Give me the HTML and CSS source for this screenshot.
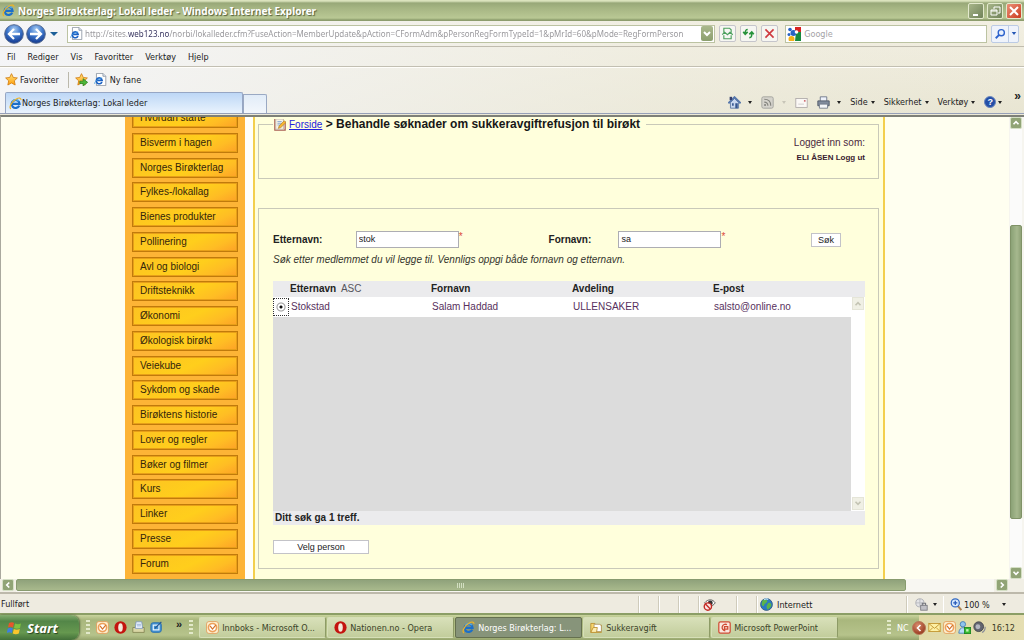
FILE: index.html
```html
<!DOCTYPE html>
<html lang="no">
<head>
<meta charset="utf-8">
<title>Norges Birøkterlag: Lokal leder</title>
<link rel="stylesheet" href="styles.css">
</head>
<body>
<svg class="defs" aria-hidden="true">
  <defs>
    <radialGradient id="blueBall" cx=".5" cy=".25" r=".8"><stop offset="0" stop-color="#a9cdf2"/><stop offset=".45" stop-color="#3f78cc"/><stop offset="1" stop-color="#0c2f86"/></radialGradient>
    <radialGradient id="redBall" cx=".4" cy=".3" r=".8"><stop offset="0" stop-color="#d98a6c"/><stop offset="1" stop-color="#8e2f14"/></radialGradient>
    <linearGradient id="starFill" x2="0" y2="1"><stop offset="0" stop-color="#ffe680"/><stop offset="1" stop-color="#ff9d0a"/></linearGradient>
  </defs>
  <symbol id="ie" viewBox="0 0 16 16">
    <path d="M12.6 10.6A4.9 4.9 0 1 1 13 8.4H4.2" fill="none" stroke="#1c6fc9" stroke-width="2.7"/>
    <path d="M12 5.2A4.9 4.9 0 0 0 4 5.5" fill="none" stroke="#58b1ee" stroke-width="1.5"/>
    <path d="M2.4 14.6C-.8 12.6 4 5 9 2.4c3-1.700 6-1.700 5.600 1.200" fill="none" stroke="#f0b323" stroke-width="1.500"/>
  </symbol>
  <symbol id="iepage" viewBox="0 0 16 16">
    <path d="M3 .5h8l3.500 3.500v11.500H3z" fill="#fff" stroke="#87919e"/><path d="M11 .5V4h3.500" fill="#dfe7f2" stroke="#87919e"/>
    <path d="M9.800 11A3.600 3.600 0 1 1 10 9H4" fill="none" stroke="#1c62c4" stroke-width="2"/>
    <path d="M1 13.500c-1-2 3-6.500 9-7.500" fill="none" stroke="#3d9ae0" stroke-width="1"/>
  </symbol>
  <symbol id="star" viewBox="0 0 16 16"><path d="M8 .8l2.200 4.700 5 .6-3.700 3.500 1 5.200L8 12.300l-4.500 2.500 1-5.200L.8 6.100l5-.6z" fill="url(#starFill)" stroke="#d27a0c"/></symbol>
  <symbol id="outlook" viewBox="0 0 16 16"><rect x=".7" y=".7" width="14.600" height="14.600" rx="3" fill="#fdf1d0" stroke="#e29a56"/><circle cx="8" cy="8" r="5" fill="#fff" stroke="#eda05a" stroke-width="2"/><path d="M5 6l3 4 4-5" fill="none" stroke="#d5742a" stroke-width="1.500"/></symbol>
  <symbol id="opera" viewBox="0 0 16 16"><ellipse cx="8" cy="8" rx="7.500" ry="7.700" fill="#c4140f"/><ellipse cx="8" cy="8" rx="2.800" ry="5.200" fill="#f4e9dc"/></symbol>
</svg>

<header class="titlebar">
  <svg class="ico"><use href="#ie"/></svg>
  <h1 class="title">Norges Birøkterlag: Lokal leder - Windows Internet Explorer</h1>
  <div class="winbtns">
    <button class="win" aria-label="Minimer"><svg viewBox="0 0 14 14"><path d="M4 11h5" stroke="#fff" stroke-width="2"/></svg></button>
    <button class="win" aria-label="Gjenopprett"><svg viewBox="0 0 14 14"><path d="M6 5V3h6v6h-2M3 6h6v5H3zM3 7h6" fill="none" stroke="#fff"/></svg></button>
    <button class="win close" aria-label="Lukk"><svg viewBox="0 0 14 14"><path d="M3 3l8 8M11 3l-8 8" stroke="#fff" stroke-width="2"/></svg></button>
  </div>
</header>

<div class="chrome">
  <div class="addressbar">
    <button class="nav" aria-label="Tilbake"><svg viewBox="0 0 20 20"><circle cx="10" cy="10" r="9.300" fill="url(#blueBall)" stroke="#52688f"/><path d="M16 10H5.500M10 5l-5 5 5 5" fill="none" stroke="#fff" stroke-width="2.300"/></svg></button>
    <button class="nav" aria-label="Frem"><svg viewBox="0 0 20 20"><circle cx="10" cy="10" r="9.300" fill="url(#blueBall)" stroke="#52688f"/><path d="M4 10h10.500M10 5l5 5-5 5" fill="none" stroke="#fff" stroke-width="2.300"/></svg></button>
    <button class="recent" aria-label="Nylige sider"><svg viewBox="0 0 8 6"><path d="M0 1h8L4 5z" fill="#1c5f98"/></svg></button>
    <div class="box url">
      <svg class="ico"><use href="#iepage"/></svg>
      <input class="urlinput" aria-label="Adresse" value="http://sites.web123.no/norbi/lokalleder.cfm?FuseAction=MemberUpdate&amp;pAction=CFormAdm&amp;pPersonRegFormTypeId=1&amp;pMrId=60&amp;pMode=RegFormPerson">
      <button class="drop" aria-label="Vis adresser"><svg viewBox="0 0 12 14"><path d="M3 5l3 3 3-3" fill="none" stroke="#fff" stroke-width="2"/></svg></button>
    </div>
    <button class="tool" aria-label="Kompatibilitet"><svg viewBox="0 0 16 16"><path d="M3.500 7V1.500h7l2 2V7M3.500 10v4.500h9V10M1.500 9.500l3-3 3.500 3 3-3 3.500 3" fill="none" stroke="#4ba05c" stroke-width="1.400"/></svg></button>
    <button class="tool" aria-label="Oppdater"><svg viewBox="0 0 16 16"><path d="M7 3c-3 0-3 2-3 5M1.500 6L4 9l3-3M9 13c3 0 3-2 3-5M9 9l3-3 2.500 3" fill="none" stroke="#27933c" stroke-width="2"/></svg></button>
    <button class="tool" aria-label="Stopp"><svg viewBox="0 0 16 16"><path d="M3 3l10 10M13 3L3 13" stroke="#cf3a40" stroke-width="2"/></svg></button>
    <div class="box search">
      <svg class="google" viewBox="0 0 14 14"><rect width="14" height="14" fill="#fff"/><path d="M8 0h6v6H8z" fill="#d8231f"/><path d="M9 5h5v9H8z" fill="#178a3e"/><circle cx="3" cy="2.500" r="1.800" fill="#2863c4"/><circle cx="6.500" cy="6" r="3" fill="#2863c4"/><circle cx="2" cy="7.500" r="1.500" fill="#2863c4"/><circle cx="4.500" cy="12" r="3" fill="#f5b21a"/><circle cx="9.500" cy="5" r="1.800" fill="#fff"/></svg>
      <input class="searchinput" aria-label="Søk på nettet" placeholder="Google">
    </div>
    <div class="searchgroup">
      <button class="searchbtn" aria-label="Søk"><svg viewBox="0 0 14 14"><circle cx="8.500" cy="5.500" r="3.600" fill="#e9f1fd" stroke="#2c62cd" stroke-width="1.600"/><path d="M6 8l-4 4" stroke="#2c62cd" stroke-width="2.200"/></svg></button>
      <button class="searchmore" aria-label="Søkevalg"><svg viewBox="0 0 8 6"><path d="M1 1h6L4 5z" fill="#2457b5"/></svg></button>
    </div>
  </div>
  <nav class="menubar"><button>Fil</button><button>Rediger</button><button>Vis</button><button>Favoritter</button><button>Verktøy</button><button>Hjelp</button></nav>
  <div class="favbar">
    <button class="fav"><svg class="ico"><use href="#star"/></svg>Favoritter</button>
    <span class="divider"></span>
    <button class="fav" aria-label="Legg til i favoritter"><svg class="ico" viewBox="0 0 16 16"><use href="#star"/><path d="M6 10h4V7l5.500 4.500L10 16v-3H6z" fill="#4cb83c" stroke="#2b8423"/></svg></button>
    <button class="fav"><svg class="ico"><use href="#iepage"/></svg>Ny fane</button>
  </div>
  <div class="tabrow">
    <button class="tab"><svg class="ico"><use href="#ie"/></svg>Norges Birøkterlag: Lokal leder</button>
    <button class="newtab" aria-label="Ny fane"></button>
    <div class="commands">
      <button class="cmd home" aria-label="Startside"><svg class="ico" viewBox="0 0 16 16"><path d="M3 8v7h10V8L8 3z" fill="#c9d8ef" stroke="#56739f"/><path d="M.5 9L8 1.500 15.500 9" fill="none" stroke="#5778ac" stroke-width="2.400"/><path d="M2 1h3v4H2z" fill="#35406f"/><path d="M9 9h3v6H9zM5 9h2v3H5z" fill="#35568f"/></svg><i></i></button>
      <button class="cmd rss" aria-label="Feeder"><svg class="ico" viewBox="0 0 16 16"><rect x="1" y="1" width="14" height="14" rx="2" fill="#d5d3cc" stroke="#9c9c98"/><path d="M4 4c5 0 8 3 8 8M4 7.500c3 0 4.500 2 4.500 4.500" fill="none" stroke="#85857f" stroke-width="1.400"/><circle cx="5" cy="11" r="1.300" fill="#85857f"/></svg><i class="faint"></i></button>
      <button class="cmd mail" aria-label="Les e-post"><svg class="ico" viewBox="0 0 16 16"><rect x="1" y="3" width="14" height="11" fill="#fbf8f5" stroke="#aaa5a5"/><rect x="11" y="5" width="2" height="2" fill="#cf6b70"/><path d="M4 10h7" stroke="#c9c5c5"/></svg></button>
      <button class="cmd print" aria-label="Skriv ut"><svg class="ico" viewBox="0 0 16 16"><path d="M4 6V1h8v5" fill="#eef2fb" stroke="#60697e"/><path d="M1 6h14v6H1z" fill="#818c9d" stroke="#465060"/><path d="M3 10h10v5H3z" fill="#f4f6f9" stroke="#6a7484"/></svg><i></i></button>
      <button class="cmd">Side<i></i></button>
      <button class="cmd">Sikkerhet<i></i></button>
      <button class="cmd">Verktøy<i></i></button>
      <button class="cmd help" aria-label="Hjelp"><span class="q">?</span><i></i></button>
    </div>
    <button class="more" aria-label="Flere kommandoer">»</button>
  </div>
</div>

<div class="viewport">
  <div class="page">
    <div class="site">
      <nav class="side">
        <a href="#">Hvordan starte</a><a href="#">Bisverm i hagen</a><a href="#">Norges Birøkterlag</a><a href="#">Fylkes-/lokallag</a><a href="#">Bienes produkter</a><a href="#">Pollinering</a><a href="#">Avl og biologi</a><a href="#">Driftsteknikk</a><a href="#">Økonomi</a><a href="#">Økologisk birøkt</a><a href="#">Veiekube</a><a href="#">Sykdom og skade</a><a href="#">Birøktens historie</a><a href="#">Lover og regler</a><a href="#">Bøker og filmer</a><a href="#">Kurs</a><a href="#">Linker</a><a href="#">Presse</a><a href="#">Forum</a>
      </nav>
      <main class="main">
        <fieldset class="panel intro">
          <legend><svg class="note" viewBox="0 0 14 14"><path d="M1 0v13h12V3" fill="#fff" stroke="#a95f50" stroke-width="1.500"/><path d="M2 0h9v12H2z" fill="#f8f4e8" stroke="#c2b2a0"/><path d="M4 3h5M4 5h5M4 7h3" stroke="#7da0cc"/><path d="M5 11l1-3 6-6 2 2-6 6z" fill="#f6b532" stroke="#a8782c" stroke-width=".7"/></svg><a href="#">Forside</a> &gt; Behandle søknader om sukkeravgiftrefusjon til birøkt</legend>
          <p class="logged">Logget inn som:</p>
          <p class="user">ELI ÅSEN <a href="#">Logg ut</a></p>
        </fieldset>
        <fieldset class="panel form">
          <div class="fields">
            <label for="last">Etternavn:</label>
            <span class="field"><input id="last" value="stok"><em>*</em></span>
            <label for="first">Fornavn:</label>
            <span class="field"><input id="first" value="sa"><em>*</em></span>
            <button class="btn sok">Søk</button>
          </div>
          <p class="hint">Søk etter medlemmet du vil legge til. Vennligs oppgi både fornavn og etternavn.</p>
          <table class="hits">
            <colgroup><col class="cpick"><col class="cdata"><col class="cdata"><col class="cdata"><col><col class="cscroll"></colgroup>
            <thead><tr><th></th><th>Etternavn <span>ASC</span></th><th>Fornavn</th><th>Avdeling</th><th>E-post</th><th></th></tr></thead>
            <tbody>
              <tr class="hit"><td class="pick"><input type="radio" name="person" aria-label="Stokstad" checked></td><td>Stokstad</td><td>Salam Haddad</td><td>ULLENSAKER</td><td>salsto@online.no</td><td class="track"><button aria-label="Rull opp"><svg viewBox="0 0 12 12"><path d="M3 7.500l3-3 3 3" fill="none" stroke="#c4c4b4" stroke-width="2"/></svg></button></td></tr>
              <tr class="rest"><td colspan="5"></td><td class="track bottom"><button aria-label="Rull ned"><svg viewBox="0 0 12 12"><path d="M3 4.500l3 3 3-3" fill="none" stroke="#c4c4b4" stroke-width="2"/></svg></button></td></tr>
            </tbody>
            <tfoot><tr><td colspan="6">Ditt søk ga 1 treff.</td></tr></tfoot>
          </table>
          <button class="btn velg">Velg person</button>
        </fieldset>
      </main>
    </div>
  </div>
  <div class="vscroll">
    <button class="sb" aria-label="Opp"><svg viewBox="0 0 12 12"><path d="M3 7.500l3-3 3 3" fill="none" stroke="#fff" stroke-width="2"/></svg></button>
    <div class="vtrack"><div class="vthumb"></div></div>
    <button class="sb" aria-label="Ned"><svg viewBox="0 0 12 12"><path d="M3 4.500l3 3 3-3" fill="none" stroke="#fff" stroke-width="2"/></svg></button>
  </div>
</div>
<div class="hscroll">
  <button class="sb" aria-label="Venstre"><svg viewBox="0 0 12 12"><path d="M7.500 3l-3 3 3 3" fill="none" stroke="#fff" stroke-width="2"/></svg></button>
  <div class="htrack"><div class="hthumb"><span class="grip"></span></div></div>
  <button class="sb" aria-label="Høyre"><svg viewBox="0 0 12 12"><path d="M4.500 3l3 3-3 3" fill="none" stroke="#fff" stroke-width="2"/></svg></button>
</div>

<footer class="status">
  <span class="msg">Fullført</span>
  <span class="cell"></span><span class="cell"></span><span class="cell"></span>
  <span class="cell"><svg class="ico" viewBox="0 0 16 16"><path d="M2 6c4-5 10-5 13 0-3 5-9 5-13 0z" fill="#fff" stroke="#444"/><circle cx="9" cy="6" r="3" fill="#333"/><circle cx="6" cy="10.500" r="4.500" fill="#fbe4e2" stroke="#c32a24" stroke-width="1.700"/><path d="M3 7.500l6 6" stroke="#c32a24" stroke-width="1.700"/></svg></span>
  <span class="cell"></span>
  <span class="cell zone"><svg class="ico" viewBox="0 0 16 16"><circle cx="8" cy="8" r="7.300" fill="#2b79c4" stroke="#31577c"/><path d="M3 3c3-2 6-1 6 1S5 7 5 9 3 10 2 8zM10 6c3-1 4 1 4 3s-3 4-4 5-2-3-2-4z" fill="#5cb44a"/><path d="M5 2c2-1 4-1 5 0" stroke="#bfe4fa" fill="none" stroke-width="1.500"/></svg>Internett</span>
  <button class="cell lock" aria-label="Beskyttet modus"><svg class="ico" viewBox="0 0 16 16"><circle cx="6" cy="6" r="5" fill="#e3e3e6" stroke="#a4a6ac"/><path d="M1 6h9M6 1v9" stroke="#b4b6bc"/><rect x="7" y="9" width="8" height="6" fill="#c0c0c6" stroke="#76777e"/><path d="M9 9V6.500h4V9" fill="none" stroke="#76777e" stroke-width="1.400"/></svg><i></i></button>
  <button class="cell zoom"><svg class="ico" viewBox="0 0 16 16"><path d="M9 9l5 6" stroke="#b08450" stroke-width="2.500"/><circle cx="6.500" cy="6" r="5" fill="#d7e9fc" stroke="#3469c2" stroke-width="1.500"/><path d="M4 6h5M6.500 3.500v5" stroke="#2557b8" stroke-width="1.500"/></svg>100 %<i></i></button>
</footer>

<footer class="taskbar">
  <button class="start"><svg viewBox="0 0 16 16"><path d="M2 3c2-1 4-1 5 0L6 7.500c-2-1-3-1-5 0z" fill="#e8552c"/><path d="M8 3.400c2 1 4 1 6 0L13 8c-2 1-4 1-6 0z" fill="#7fc23f"/><path d="M.8 8.500c2-1 4-1 5 0l-1 4.500c-2-1-3-1-5 0z" fill="#3e7fe0"/><path d="M6.800 9c2 1 4 1 6 0l-1 4.500c-2 1-4 1-6 0z" fill="#f9c62c"/></svg>Start</button>
  <span class="handle"></span>
  <div class="quick">
    <button aria-label="Outlook"><svg class="ico"><use href="#outlook"/></svg></button>
    <button aria-label="Opera"><svg class="ico"><use href="#opera"/></svg></button>
    <button aria-label="Skriver"><svg class="ico" viewBox="0 0 16 16"><path d="M1 8h14v6H1z" fill="#d9d6a5" stroke="#80814f"/><path d="M5 1h7l1 8H4z" fill="#f2f7ff" stroke="#7694bb"/><path d="M6 4h5M6 6h5" stroke="#80a3cf"/></svg></button>
    <button aria-label="Skrivebord"><svg class="ico" viewBox="0 0 16 16"><rect x="1" y="2" width="13" height="12" rx="3" fill="#3f8fd0" stroke="#2a6cac"/><path d="M4 5h7v6H4z" fill="none" stroke="#e9f4fd" stroke-width="1.500"/><path d="M6 9l8-8" stroke="#255691" stroke-width="1.500"/></svg></button>
  </div>
  <button class="more2" aria-label="Flere">»</button>
  <span class="handle"></span>
  <div class="tasks">
    <button class="task"><svg class="ico"><use href="#outlook"/></svg><span>Innboks - Microsoft O...</span></button>
    <button class="task"><svg class="ico"><use href="#opera"/></svg><span>Nationen.no - Opera</span></button>
    <button class="task active"><svg class="ico"><use href="#ie"/></svg><span>Norges Birøkterlag: L...</span></button>
    <button class="task"><svg class="ico" viewBox="0 0 16 16"><path d="M1 3h5l1 2h7v9H1z" fill="#f9d66c" stroke="#b88a27"/><path d="M5 4h7l2 2v7H5z" fill="#fff" stroke="#a9935f"/><path d="M1 14l3-6h5l-1 6z" fill="#fdecae" stroke="#b88a27"/></svg><span>Sukkeravgift</span></button>
    <button class="task"><svg class="ico" viewBox="0 0 16 16"><rect x="1" y="1" width="14" height="14" rx="2" fill="#fbe7df" stroke="#cf4a33" stroke-width="1.500"/><path d="M11 4.500A4 4 0 1 0 9 12M8 12V7h4v3H8" fill="none" stroke="#cf4a33" stroke-width="1.600"/></svg><span>Microsoft PowerPoint</span></button>
  </div>
  <span class="handle"></span>
  <span class="lang">NC</span>
  <div class="tray">
    <button class="chev" aria-label="Vis skjulte ikoner"><svg viewBox="0 0 14 14"><circle cx="7" cy="7" r="6.500" fill="url(#redBall)" stroke="#b77a5b"/><path d="M8.500 4l-3 3 3 3" fill="none" stroke="#fff" stroke-width="1.600"/></svg></button>
    <svg class="ico" viewBox="0 0 16 16"><rect x="1" y="3" width="14" height="10" fill="#fdf0a4" stroke="#bd8d25"/><path d="M1 3l7 6 7-6M1 13l5-5M15 13l-5-5" fill="none" stroke="#bd8d25"/></svg>
    <svg class="ico"><use href="#outlook"/></svg>
    <svg class="ico" viewBox="0 0 16 16"><circle cx="6" cy="4" r="3.300" fill="#8fc4ec" stroke="#3b78b4"/><path d="M1 15c0-9 10-9 10 0z" fill="#b8dcf5" stroke="#3b78b4"/><rect x="8" y="8" width="7.500" height="7.500" fill="#35ba31" stroke="#16831b"/><rect x="10" y="10" width="3" height="3" fill="#c9f3b7"/></svg>
    <svg class="ico" viewBox="0 0 16 16"><circle cx="7" cy="7" r="6" fill="#62656f" stroke="#3d4049"/><circle cx="6" cy="7" r="3" fill="#b3b6c0"/><path d="M11 14c3-1 4-4 4-7" fill="none" stroke="#8a8d97" stroke-width="1.500"/></svg>
    <time class="clock">16:12</time>
  </div>
</footer>
</body>
</html>
```
FILE: styles.css
```css
* { box-sizing: border-box; }
html, body { height: 100%; margin: 0; }
body {
  display: flex;
  flex-direction: column;
  overflow: hidden;
  background: #ece9d8;
  color: #222;
  font: 9px/12px "DejaVu Sans Condensed", "Noto Sans", sans-serif;
}
button, input { font: inherit; color: inherit; margin: 0; padding: 0; }
button { background: none; border: 0; display: inline-flex; align-items: center; white-space: nowrap; }
p { margin: 0; }
svg { display: block; flex: none; }
.defs { position: absolute; width: 0; height: 0; }
.ico { width: 13px; height: 13px; flex: none; }
i { border: 3px solid transparent; border-width: 3px 2px 0; border-top-color: #222; width: 0; height: 0; margin-left: 3px; }
i.faint { border-top-color: #c8c5b8; }

/* Title bar */
.titlebar {
  display: flex;
  align-items: center;
  gap: 3px;
  flex: none;
  height: 21px;
  padding: 0 2px;
  background: linear-gradient(#dbe3bd 0, #dbe3bd 1px, #98a878 3px, #a6b583 8px, #b9c894 18px, #8d9d6d 20px);
}
.title {
  flex: 1;
  margin: 0;
  color: #fff;
  font: bold 10px/14px "Noto Sans", sans-serif;
  text-shadow: 1px 1px 1px #535f3b;
}
.winbtns { display: flex; gap: 3px; }
.win { width: 16px; height: 16px; border: 1px solid #e3e9cd; border-radius: 2px; background: linear-gradient(135deg, #a7b589, #71835a); }
.win svg { width: 14px; height: 14px; }
.close { background: linear-gradient(135deg, #eb9077, #cb3b20); }

/* Toolbars */
.chrome { flex: none; background: linear-gradient(90deg, rgba(245, 246, 250, .9), rgba(240, 238, 226, .5) 65%, transparent), linear-gradient(#f2efe2, #e8e5d2); }
.addressbar { display: flex; align-items: center; height: 26px; padding: 0 5px 0 4px; border-bottom: 1px solid #c0bcae; }
.nav { width: 20px; height: 20px; margin-right: 2px; }
.nav svg { width: 20px; height: 20px; }
.recent { margin: 0 9px 0 2px; }
.recent svg { width: 8px; height: 6px; }
.box { display: flex; align-items: center; height: 18px; border: 1px solid #bcc3a2; background: #fff; }
.url { flex: 660; min-width: 0; padding: 0 1px 0 2px; gap: 2px; }
.urlinput, .searchinput { flex: 1; min-width: 0; border: 0; outline: 0; background: none; color: #a4a3a6; }
.urlinput {
  height: 14px;
  font: 8px/14px "Noto Sans", sans-serif;
  color: transparent;
  background: linear-gradient(90deg, #949397 43px, #33305c 43px 84px, #949397 84px);
  -webkit-background-clip: text;
  background-clip: text;
}
.searchinput::placeholder { color: #a4a3a6; opacity: 1; }
.drop { width: 12px; height: 15px; background: linear-gradient(#aab88c, #8c9f6e); border-radius: 2px; }
.drop svg { width: 12px; height: 14px; }
.tool { width: 17px; height: 17px; margin-left: 4px; border: 1px solid #c5c5cb; border-radius: 2px; background: #f6f6f2; justify-content: center; }
.tool svg { width: 13px; height: 13px; }
.search { flex: 204; min-width: 0; margin: 0 4px 0 7px; padding-left: 1px; gap: 3px; }
.google { width: 14px; height: 14px; }
.searchgroup { display: flex; height: 18px; border: 1px solid #bccbe4; border-radius: 2px; background: #eff3fb; }
.searchbtn { width: 16px; justify-content: center; }
.searchbtn svg { width: 12px; height: 12px; }
.searchmore { width: 10px; border-left: 1px solid #bccbe4; justify-content: center; }
.searchmore svg { width: 6px; height: 5px; }
.menubar { display: flex; align-items: center; gap: 12px; height: 20px; padding-left: 7px; border-bottom: 1px solid #c2bfb2; box-shadow: 0 1px #fffefa; }
.favbar { display: flex; align-items: center; height: 25px; padding-left: 5px; }
.fav { gap: 2px; margin-right: 6px; }
.fav + .fav { gap: 3px; }
.divider { width: 1px; height: 16px; margin: 0 6px 0 3px; background: #bbb8ab; }
.tabrow { display: flex; align-items: flex-end; height: 22px; padding-left: 5px; border-bottom: 1px solid #96a0b8; }
.tab { width: 238px; height: 21px; padding-left: 3px; border: 1px solid #96a6c4; border-bottom: 0; border-radius: 2px 2px 0 0; background: linear-gradient(#bdd7f6, #e9f3fd); }
.newtab { width: 24px; height: 19px; border: 1px solid #9aa9c3; border-bottom: 0; border-radius: 0 2px 0 0; background: linear-gradient(#e1ecf8, #f3f7fc); }
.commands { display: flex; align-items: center; flex: 1; justify-content: flex-end; gap: 9px; height: 22px; }
.cmd { height: 14px; }
.home i, .print i { margin-left: 7px; }
.rss i { margin-left: 8px; }
.q { width: 12px; height: 12px; border: 1px solid #6b86bd; border-radius: 50%; background: #234fa7; color: #fff; font: bold 9px/10px "Liberation Sans", sans-serif; text-align: center; }
.help i { margin-left: 2px; }
.more { align-self: flex-start; margin: 0 2px 0 12px; padding-right: 1px; font: bold 12px/8px "Liberation Sans", sans-serif; }

/* Browser viewport */
.viewport { display: flex; flex: 1; min-height: 0; border-top: 2px solid #7e8078; border-left: 1px solid #aaa99e; margin-top: 1px; }
.page { flex: 1; min-width: 0; overflow: hidden; background: #fffff0; font: 10px/12px "Liberation Sans", Arial, sans-serif; }
.site { display: flex; width: 100%; max-width: 760px; height: 100%; margin: 0 auto; background: #fffffa; }
.side { display: flex; flex-direction: column; justify-content: space-between; flex: none; width: 120px; margin: -9px 8px 0 0; padding: 0 7px 5px 7px; background: #fdb436; }
.side a { height: 20px; padding-left: 7px; border: 1px solid #c07a0c; box-shadow: inset 0 0 0 1px #e79f18; color: #33250b; line-height: 17px; text-decoration: none; background: linear-gradient(155deg, #fdc322 0, #ffce1c 55%, #ffbd24 78%, #fda127); }
.main { flex: 1; min-width: 0; padding: 0 4px 0 3px; border-left: 2px solid #f3cf4e; border-right: 2px solid #f3cf4e; background: #ffffdc; }
.panel { min-width: 0; margin: 0; padding: 0 13px 0 14px; border: 1px solid #c9c9b9; }
.intro { min-height: 62px; margin-bottom: 29px; }
legend { display: flex; align-items: center; padding: 0 6px 0 1px; color: #171717; font-weight: bold; font-size: 12px; line-height: 15px; white-space: pre; }
legend a { color: #2323dc; font-weight: normal; font-size: 10px; }
.note { width: 12px; height: 12px; margin-right: 3px; }
.logged { padding: 4px 0 3px; color: #4b2841; line-height: 13px; text-align: right; }
.user { color: #381b30; font-weight: bold; font-size: 8px; text-align: right; }
.user a { color: inherit; text-decoration: none; }
.form { padding-top: 22px; padding-bottom: 14px; }
.fields { display: grid; grid-template-columns: 83fr 193fr 70fr 193fr 54fr; align-items: center; }
.fields label, th { font-weight: bold; }
.field { display: flex; }
.field input { width: 103px; height: 17px; padding: 0 0 2px 2px; border: 1px solid #adadb3; background: #fff; font-size: 9px; }
.field em { color: #dd4b3b; font-style: normal; }
.btn { justify-content: center; height: 14px; border: 1px solid #c3c3c8; background: #fff; font-size: 9px; }
.sok { width: 30px; }
.hint { margin: 6px 0 15px; color: #34342c; font-style: italic; }
.hits { width: 100%; table-layout: fixed; border-collapse: collapse; }
.hits th, .hits td { padding: 0; text-align: left; white-space: nowrap; }
.cpick { width: 17px; }
.cdata { width: 141px; }
.cscroll { width: 14px; }
.hits thead tr, .hits tfoot tr { background: #ebebed; }
.hits th { height: 16px; }
.hits th span { margin-left: 2px; color: #55555c; font-weight: normal; }
.hit { background: #fff; }
.hits .hit td { height: 20px; padding-left: 1px; color: #57305d; }
.hits .hit .pick { padding: 0; }
.pick input { appearance: none; display: block; width: 16px; height: 18px; border: 1px dotted #333; background: radial-gradient(circle at 7px 8px, #111 0 1px, #fff 2px 3px, #999 4px, #fff 5px); }
.rest td { height: 194px; background: #dcdcdc; }
.hits .track { padding: 0 0 0 1px; background: #fff; vertical-align: top; }
.hits .bottom { vertical-align: bottom; }
.hits .track button { width: 12px; height: 13px; background: #f0f0e5; border: 1px solid #e5e5d8; }
.track svg { width: 10px; height: 10px; }
.hits tfoot td { height: 14px; padding-left: 2px; color: #222; font-weight: bold; }
.velg { width: 96px; margin-top: 15px; }

/* Scroll bars */
.vscroll { display: flex; flex-direction: column; flex: none; width: 15px; padding: 0 2px 0 1px; background: #f6f5ef; }
.sb { flex: none; width: 12px; height: 12px; border: 1px solid #d4dfc4; border-radius: 2px; background: #91a476; }
.sb svg { width: 10px; height: 10px; }
.vtrack { flex: 1; padding: 96px 0 0; background: #fbfbfa; }
.vthumb { height: 86%; max-height: 295px; border: 1px solid #7f9267; border-radius: 2px; background: linear-gradient(90deg, #8ba276, #a6b88e 60%, #8fa277); }
.hscroll { display: flex; flex: none; height: 13px; padding: 0 16px 0 2px; background: #f1efe5; }
.htrack { flex: 1; margin: 0 2px; background: #f8f7f2; }
.hthumb { display: flex; align-items: center; justify-content: center; width: 91%; height: 12px; border: 1px solid #889b6f; border-radius: 2px; background: linear-gradient(#8fa27b, #a8b98c); }
.grip { width: 7px; height: 5px; background: repeating-linear-gradient(90deg, #d3dfc2 0 1px, transparent 1px 2px); }

/* Status bar */
.status { display: flex; flex: none; height: 21px; padding: 2px 14px 2px 1px; border-top: 2px solid #bdb9ab; background: #eeebe0; }
.msg { flex: 1; line-height: 17px; }
.cell { display: flex; align-items: center; flex: none; width: 20px; height: 17px; padding-left: 2px; border-left: 1px solid #cfcbbb; box-shadow: inset 1px 0 #fff; }
.cell:nth-of-type(5) { width: 38px; padding-left: 4px; }
.zone { width: 150px; gap: 4px; padding-left: 3px; }
.lock { width: 36px; padding-left: 8px; }
.lock i { margin-left: 5px; }
.zoom { width: 68px; gap: 1px; padding-left: 7px; border-left-color: transparent; }
.zoom i { margin-left: 11px; }

/* Task bar */
.taskbar { display: flex; align-items: center; flex: none; height: 27px; border-top: 2px solid #8b9e66; background: linear-gradient(#c9d49d, #a9b77d 20%, #b6c38b 80%, #95a46c); }
.start { width: 79px; height: 25px; gap: 4px; padding-left: 7px; border-radius: 0 8px 8px 0; background: linear-gradient(#84ad6f, #538648 25%, #66984f 70%, #426f39); box-shadow: 1px 0 2px #4f653a; color: #fff; font: italic bold 13px/16px "Noto Sans", sans-serif; text-shadow: 1px 1px 1px #244220; }
.start svg { width: 16px; height: 16px; }
.handle { width: 4px; height: 16px; margin: 0 6px 0 7px; background: repeating-linear-gradient(#e2e9c9 0 2px, transparent 2px 4px); }
.quick { display: flex; gap: 5px; }
.more2 { margin-left: 13px; padding-bottom: 8px; font: bold 11px/12px "Liberation Sans", sans-serif; }
.tasks { display: flex; flex: 1; min-width: 0; gap: 1px; }
.task { flex: 0 1 127px; min-width: 0; height: 21px; padding-left: 6px; gap: 3px; border: 1px solid #d6dfb7; border-right-color: #8d9b66; border-radius: 2px; background: linear-gradient(#d8e0b9, #c2cd9c); color: #3b4328; }
.task span { overflow: hidden; }
.active { border-color: #65704f; background: #87947a; color: #fff; }
.lang { color: #fff; font-size: 9px; }
.tray { display: flex; align-items: center; gap: 2px; height: 25px; margin-left: 3px; padding-right: 9px; background: linear-gradient(90deg, transparent 7px, #e0d9a6 7px, #e5deb2); }
.chev svg { width: 14px; height: 14px; }
.clock { margin-left: 4px; color: #3b3b25; }
```
